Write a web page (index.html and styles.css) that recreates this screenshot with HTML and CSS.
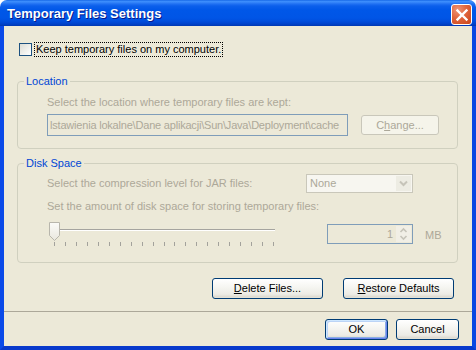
FILE: index.html
```html
<!DOCTYPE html>
<html>
<head>
<meta charset="utf-8">
<link rel="stylesheet" href="styles.css">
</head>
<body>
<div class="window">
  <div class="titlebar">
    <span class="title">Temporary Files Settings</span>
    <div class="close">
      <svg width="18" height="18" viewBox="0 0 18 18"><path d="M4.5 4.5 L13.5 13.5 M13.5 4.5 L4.5 13.5" stroke="#fff" stroke-width="2.4" stroke-linecap="square"/></svg>
    </div>
  </div>
  <div class="frame">
    <div class="content">
      <div class="keep-row">
        <span class="checkbox"></span>
        <span class="keep-label">Keep temporary files on my computer.</span>
      </div>

      <fieldset class="group location">
        <legend>Location</legend>
        <div class="group-body">
          <div class="hint">Select the location where temporary files are kept:</div>
          <div class="path-row">
            <div class="path-field">lstawienia lokalne\Dane aplikacji\Sun\Java\Deployment\cache</div>
            <div class="btn btn-change disabled">C<u>h</u>ange...</div>
          </div>
        </div>
      </fieldset>

      <fieldset class="group disk">
        <legend>Disk Space</legend>
        <div class="group-body disk-body">
          <div class="row-compress">
            <span class="hint">Select the compression level for JAR files:</span>
            <div class="combo">
              <span class="combo-text">None</span>
              <span class="combo-arrow">
                <svg width="15" height="15" viewBox="0 0 15 15"><path d="M4 5.5 L7.5 9 L11 5.5" fill="none" stroke="#C6C4B9" stroke-width="2"/></svg>
              </span>
            </div>
          </div>
          <div class="hint row-amount">Set the amount of disk space for storing temporary files:</div>
          <div class="row-slider">
            <svg class="slider" width="230" height="26" viewBox="0 0 230 26">
              <rect x="2" y="8" width="226" height="1" fill="#A5A49F"/>
              <rect x="2" y="9" width="226" height="1" fill="#FFFFFF"/>
              <g fill="#A3A29C">
                <rect x="7" y="21" width="1" height="4"/>
                <rect x="18" y="21" width="1" height="4"/>
                <rect x="29" y="21" width="1" height="4"/>
                <rect x="40" y="21" width="1" height="4"/>
                <rect x="51" y="21" width="1" height="4"/>
                <rect x="62" y="21" width="1" height="4"/>
                <rect x="73" y="21" width="1" height="4"/>
                <rect x="84" y="21" width="1" height="4"/>
                <rect x="95" y="21" width="1" height="4"/>
                <rect x="106" y="21" width="1" height="4"/>
                <rect x="117" y="21" width="1" height="4"/>
                <rect x="127" y="21" width="1" height="4"/>
                <rect x="138" y="21" width="1" height="4"/>
                <rect x="149" y="21" width="1" height="4"/>
                <rect x="160" y="21" width="1" height="4"/>
                <rect x="171" y="21" width="1" height="4"/>
                <rect x="182" y="21" width="1" height="4"/>
                <rect x="193" y="21" width="1" height="4"/>
                <rect x="204" y="21" width="1" height="4"/>
                <rect x="215" y="21" width="1" height="4"/>
                <rect x="226" y="21" width="1" height="4"/>
              </g>
              <defs>
                <linearGradient id="thumbg" x1="0" y1="0" x2="0" y2="1">
                  <stop offset="0" stop-color="#FBFBF8"/>
                  <stop offset="1" stop-color="#E9E7DE"/>
                </linearGradient>
              </defs>
              <path d="M2.5 1.5 H12.5 V14.5 L7.5 19.5 L2.5 14.5 Z" fill="url(#thumbg)" stroke="#B8B6AC" stroke-width="1"/>
            </svg>
            <div class="spinner">
              <span class="spin-value">1</span>
              <span class="spin-buttons">
                <span class="spin-btn">
                  <svg width="13" height="8" viewBox="0 0 13 8"><path d="M3.5 6 L6.5 3 L9.5 6" fill="none" stroke="#C6C4B9" stroke-width="1.6"/></svg>
                </span>
                <span class="spin-btn">
                  <svg width="13" height="8" viewBox="0 0 13 8"><path d="M3.5 2 L6.5 5 L9.5 2" fill="none" stroke="#C6C4B9" stroke-width="1.6"/></svg>
                </span>
              </span>
            </div>
            <span class="mb">MB</span>
          </div>
        </div>
      </fieldset>

      <div class="actions">
        <div class="btn btn-wide"><span><u>D</u>elete Files...</span></div>
        <div class="btn btn-wide"><span><u>R</u>estore Defaults</span></div>
      </div>
    </div>
    <div class="separator"></div>
    <div class="footer">
      <div class="btn btn-small default">OK</div>
      <div class="btn btn-small">Cancel</div>
    </div>
  </div>
</div>
</body>
</html>
```

FILE: styles.css
```css
html, body {
  margin: 0;
  padding: 0;
  background: #ffffff;
}

body {
  font-family: "Liberation Sans", Arial, sans-serif;
  font-size: 11px;
  color: #000;
}

.window {
  width: 476px;
  height: 350px;
  display: flex;
  flex-direction: column;
  border-radius: 7px 7px 0 0;
  overflow: hidden;
}

.titlebar {
  height: 26px;
  flex: none;
  box-sizing: border-box;
  display: flex;
  align-items: flex-start;
  justify-content: space-between;
  padding: 0 4px 0 7px;
  background: linear-gradient(to bottom,
    #0A5BE0 0px, #3D8FFC 1px, #3A8AFB 2px, #1F70F2 4px, #0B5FEB 6px,
    #0057E8 10px, #0055E6 18px, #004EDD 21px, #0046D2 23px, #003DBF 25px, #0037B0 26px);
}

.title {
  color: #fff;
  font-weight: bold;
  font-size: 13px;
  line-height: 15px;
  margin-top: 6px;
  text-shadow: 1px 1px 0 #0A1A8A;
}

.close {
  width: 21px;
  height: 21px;
  margin-top: 4px;
  box-sizing: border-box;
  border: 1px solid #ffffff;
  border-radius: 3px;
  background: radial-gradient(circle at 30% 25%, #EE9476 0%, #E0653C 45%, #C9441A 100%);
  display: flex;
  align-items: center;
  justify-content: center;
}

.close svg {
  display: block;
}

.frame {
  flex: 1;
  display: flex;
  flex-direction: column;
  background: #ECE9D8;
  border-left: 4px solid #0A4AE8;
  border-right: 4px solid #0A47E2;
  border-bottom: 4px solid #0839CC;
}

.content {
  flex: 1;
  padding: 16px 14px 0 13px;
}

.keep-row {
  display: flex;
  align-items: center;
  height: 15px;
  padding-left: 2px;
}

.checkbox {
  width: 13px;
  height: 13px;
  box-sizing: border-box;
  border: 1px solid #1C5180;
  background: linear-gradient(135deg, #DCDCD4 0%, #F2F2EE 60%, #FFFFFF 100%);
  margin-right: 2px;
  flex: none;
}

.keep-label {
  border: 1px dotted #000;
  padding: 0 1px 0 1px;
  line-height: 13px;
  white-space: nowrap;
}

.group {
  margin: 18px 0 0 0;
  padding: 0;
  border: 1px solid #D0D0BF;
  border-radius: 4px;
  min-width: 0;
}

.group legend {
  padding: 0 2px;
  margin-left: 6px;
  color: #0046D5;
  line-height: 13px;
  font-size: 11px;
}

.disk {
  margin-top: 8px;
}

.group-body {
  padding: 8px 18px 12px 29px;
}

.disk-body {
  padding: 4px 18px 15px 29px;
}

.hint {
  color: #ACA899;
  line-height: 13px;
  white-space: nowrap;
}

.path-row {
  display: flex;
  align-items: center;
  margin-top: 5px;
}

.path-field {
  width: 301px;
  height: 22px;
  box-sizing: border-box;
  border: 1px solid #7F9DB9;
  padding-left: 2px;
  line-height: 20px;
  white-space: nowrap;
  overflow: hidden;
  color: #ACA899;
  letter-spacing: -0.2px;
  flex: none;
}

.btn {
  height: 21px;
  box-sizing: border-box;
  border: 1px solid #003C74;
  border-radius: 3px;
  background: linear-gradient(to bottom, #FFFFFF 0%, #F6F6F2 40%, #ECEBE5 80%, #D8D3C8 100%);
  box-shadow: inset 0 -1px 0 #E3E1D6;
  display: flex;
  align-items: center;
  justify-content: center;
  color: #000;
  line-height: 13px;
  white-space: nowrap;
  flex: none;
}

.btn.disabled {
  border-color: #C9C7BA;
  background: #F5F4EA;
  box-shadow: none;
  color: #ACA899;
}

.btn-change {
  width: 78px;
  height: 20px;
  margin-left: 13px;
}

.row-compress {
  display: flex;
  align-items: center;
  justify-content: space-between;
  height: 19px;
}

.combo {
  width: 107px;
  height: 19px;
  box-sizing: border-box;
  border: 1px solid #C9C7BA;
  background: #F7F6F0;
  margin-right: 26px;
  display: flex;
  align-items: center;
  justify-content: space-between;
  padding: 0 1px 0 3px;
}

.combo-text {
  color: #ACA899;
  line-height: 13px;
}

.combo-arrow {
  width: 15px;
  height: 15px;
  background: #EDECE3;
  display: flex;
}

.row-amount {
  margin-top: 7px;
}

.row-slider {
  display: flex;
  align-items: flex-start;
  margin-top: 8px;
  height: 26px;
}

.slider {
  display: block;
  flex: none;
}

.spinner {
  margin-left: auto;
  margin-top: 3px;
  width: 86px;
  height: 20px;
  box-sizing: border-box;
  border: 1px solid #7F9DB9;
  display: flex;
  align-items: stretch;
  padding: 1px;
}

.spin-value {
  flex: 1;
  text-align: right;
  color: #ACA899;
  line-height: 16px;
  padding-right: 3px;
}

.spin-buttons {
  width: 15px;
  display: flex;
  flex-direction: column;
  background: #F1EFE6;
}

.spin-btn {
  flex: 1;
  display: flex;
  align-items: center;
  justify-content: center;
}

.spin-btn svg {
  display: block;
}

.mb {
  width: 14px;
  margin-left: 12px;
  margin-top: 8px;
  line-height: 13px;
  color: #ACA899;
  white-space: nowrap;
}

.actions {
  display: flex;
  justify-content: flex-end;
  gap: 20px;
  margin-top: 15px;
  padding-right: 4px;
}

.btn-wide {
  width: 111px;
}

.separator {
  height: 1px;
  background: #ACA899;
  flex: none;
}

.footer {
  flex: none;
  display: flex;
  justify-content: flex-end;
  gap: 8px;
  padding: 7px 13px 6px 13px;
}

.btn-small {
  width: 63px;
}

.btn.default {
  box-shadow: inset 1px 1px 0 #CEE7FF, inset -1px -1px 0 #6982EE, inset 2px 2px 0 #BCD4F6, inset -2px -2px 0 #89ADE4;
}
```
